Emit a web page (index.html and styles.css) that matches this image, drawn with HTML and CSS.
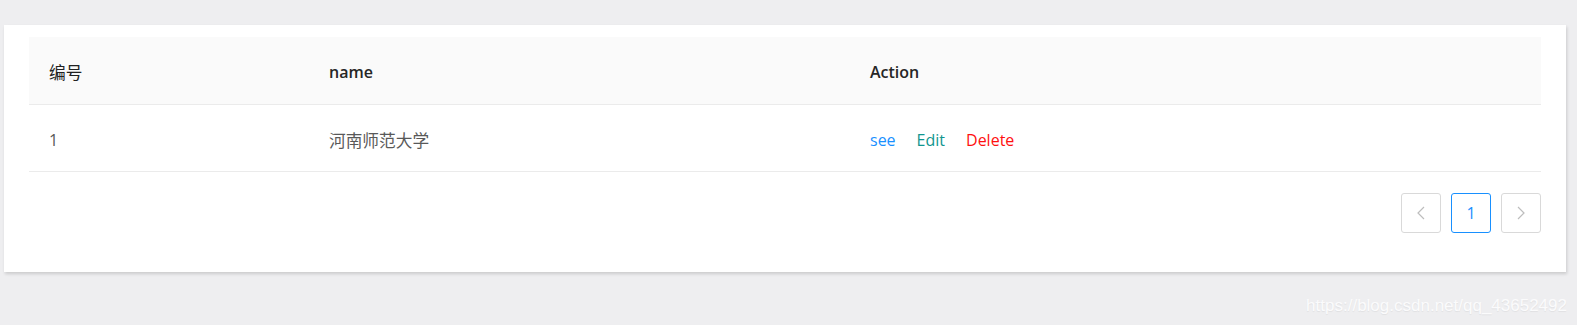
FILE: index.html
```html
<!DOCTYPE html>
<html lang="zh">
<head>
<meta charset="utf-8">
<link rel="stylesheet" href="styles.css">
</head>
<body>
<div class="page">
  <div class="card">
    <table class="table">
      <thead>
        <tr>
          <th class="col-id"><span class="cjk">编号</span></th>
          <th class="col-name">name</th>
          <th class="col-action">Action</th>
        </tr>
      </thead>
      <tbody>
        <tr>
          <td>1</td>
          <td><span class="cjk">河南师范大学</span></td>
          <td class="actions"><a class="see">see</a><a class="edit">Edit</a><a class="delete">Delete</a></td>
        </tr>
      </tbody>
    </table>
    <div class="pager">
      <span class="pg-btn">
        <svg width="10" height="14" viewBox="0 0 10 14"><path d="M8 1 L2 7 L8 13" fill="none" stroke="#bdbdbd" stroke-width="1.2"/></svg>
      </span>
      <span class="pg-btn active">1</span>
      <span class="pg-btn">
        <svg width="10" height="14" viewBox="0 0 10 14"><path d="M2 1 L8 7 L2 13" fill="none" stroke="#bdbdbd" stroke-width="1.2"/></svg>
      </span>
    </div>
  </div>
  <div class="watermark">https://blog.csdn.net/qq_43652492</div>
</div>
</body>
</html>
```
FILE: styles.css
```css
html, body {
  margin: 0;
  padding: 0;
  background: #eeeef0;
}
body {
  font-family: "Open Sans", "Noto Sans CJK SC", sans-serif;
  font-size: 16px;
}
.page {
  width: 1577px;
  height: 325px;
  padding: 25px 11px 0 4px;
  box-sizing: border-box;
  display: flex;
  flex-direction: column;
}
.card {
  background: #fff;
  padding: 12px 25px 39px 25px;
  box-shadow: 1px 2px 3px rgba(0,0,0,0.15);
  height: 247px;
  box-sizing: border-box;
}
.table {
  width: 100%;
  border-collapse: collapse;
  table-layout: fixed;
}
.table th, .table td {
  text-align: left;
  padding: 4px 20px 0 20px;
  height: 67px;
  box-sizing: border-box;
  border-bottom: 1px solid #ebebeb;
  font-weight: normal;
}
.table th {
  background: #fafafa;
  color: #262626;
  font-weight: 600;
}
.table th.col-id {
  font-weight: normal;
  color: #222;
}
.table td {
  color: #595959;
}
.cjk {
  font-size: 16.7px;
}
.col-id { width: 280px; }
.col-name { width: 541px; }
.actions a {
  margin-right: 21px;
}
.see { color: #1890ff; }
.edit { color: #11968f; }
.delete { color: #ff1010; }
.pager {
  display: flex;
  justify-content: flex-end;
  gap: 10px;
  margin-top: 21px;
}
.pg-btn {
  width: 40px;
  height: 40px;
  box-sizing: border-box;
  border: 1px solid #d9d9d9;
  border-radius: 3px;
  display: flex;
  align-items: center;
  justify-content: center;
  color: #1890ff;
  font-size: 16px;
}
.pg-btn.active {
  border-color: #1890ff;
}
.watermark {
  align-self: flex-end;
  margin-top: 24px;
  margin-right: -1px;
  font-family: "Liberation Sans", Arial, sans-serif;
  font-size: 17px;
  color: #fbfbfc;
  text-shadow: 0 1px 1px rgba(0,0,0,0.06);
}
```
